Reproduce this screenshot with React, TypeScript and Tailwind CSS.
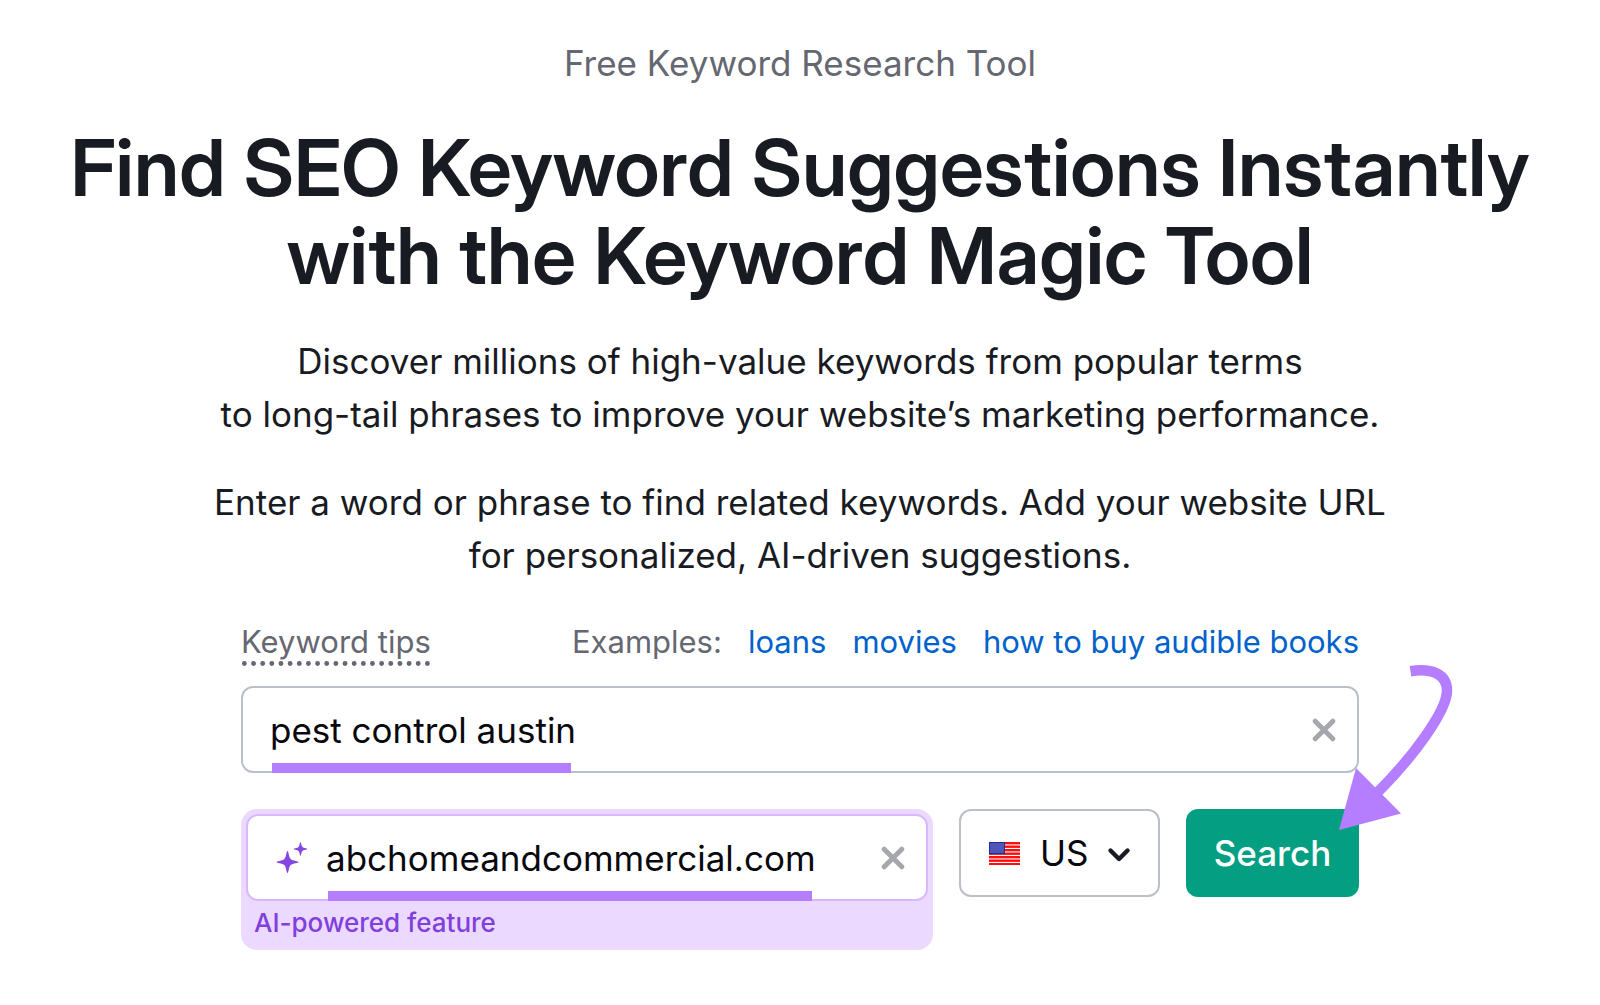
function ClearIcon() {
  return (
    <svg aria-hidden="true" viewBox="0 0 24 24" className="size-6" fill="none" stroke="#a6a7ac" strokeWidth="4.9" strokeLinecap="round">
      <path d="M3.200 3.200 20.800 20.800M20.800 3.200 3.200 20.800" />
    </svg>
  );
}

function Sparkles() {
  return (
    <svg aria-hidden="true" viewBox="0 0 32 32" className="h-8 w-8 shrink-0" fill="#8446e0">
      <path d="M11.500 9C12.700 9 12.500 14.500 14.600 16.900C17 19 22.500 18.800 22.500 20C22.500 21.200 17 21 14.600 23.100C12.500 25.500 12.700 31 11.500 31C10.300 31 10.500 25.500 8.400 23.100C6 21 .5 21.200 .5 20C.5 18.800 6 19 8.400 16.900C10.500 14.500 10.300 9 11.500 9Z" />
      <path d="M24.500 .3C25.300 .3 25.200 3.600 26.500 5C27.900 6.300 31.200 6.200 31.200 7C31.200 7.800 27.900 7.700 26.500 9C25.200 10.400 25.300 13.700 24.500 13.700C23.700 13.700 23.800 10.400 22.500 9C21.100 7.700 17.800 7.800 17.800 7C17.800 6.200 21.100 6.300 22.500 5C23.800 3.600 23.700 .3 24.500 .3Z" />
    </svg>
  );
}

function Flag() {
  return (
    <svg aria-hidden="true" viewBox="0 0 31 23" className="pointer-events-none absolute top-[33px] left-[30px] h-[23px] w-[31px]">
      <rect width="31" height="23" fill="#fff" />
      {[0, 3.500, 7, 10.500, 14, 17.500, 21].map((y) => (
        <rect key={y} y={y} width="31" height="2.400" fill="#ff0d0d" />
      ))}
      <rect width="16" height="12" fill="#1f2a9c" />
      <rect x="1" y="1" width="14" height="10" fill="#4f55b5" />
    </svg>
  );
}

function Arrow() {
  return (
    <svg aria-hidden="true" viewBox="0 0 124 172" className="pointer-events-none absolute -top-37 -right-25 h-[172px] w-[124px]">
      <path d="M75.500 10.200C97 7 112 13 112 29.500C112 50 78 96 42 132" fill="none" stroke="#b57dff" strokeWidth="10.500" />
      <path d="M21 107 66 152.500 4 169Z" fill="#b57dff" />
    </svg>
  );
}

export default function App() {
  return (
    <main className="flex min-h-screen flex-col items-center overflow-hidden bg-white px-4 pt-[39px] text-center font-['Inter',sans-serif] text-[#191b23]">
      <p className="text-[35px] leading-12 text-[#656771]">Free Keyword Research Tool</p>
      <h1 className="mt-9 font-['Inter_Display','Inter',sans-serif] text-[79px] leading-[88px] font-semibold">
        Find SEO Keyword Suggestions Instantly
        <br />
        with the Keyword Magic Tool
      </h1>
      <p className="mt-9 text-[35px] leading-[53px]">
        Discover millions of high-value keywords from popular terms
        <br />
        to long-tail phrases to improve your website’s marketing performance.
      </p>
      <p className="mt-[35px] text-[35px] leading-[53px]">
        Enter a word or phrase to find related keywords. Add your website URL
        <br />
        for personalized, AI-driven suggestions.
      </p>

      <form className="mt-10 w-full max-w-[1118px] text-left" onSubmit={(e) => e.preventDefault()}>
        <div className="flex items-start justify-between text-[31px] leading-10 text-[#656771]">
          <button type="button" className="relative">
            Keyword tips
            <svg aria-hidden="true" viewBox="0 0 188 5" className="absolute top-[39px] left-0 h-[5px] w-full">
              <path d="M2.500 2.500H186" fill="none" stroke="#656771" strokeWidth="4.900" strokeLinecap="round" strokeDasharray="0 9.150" />
            </svg>
          </button>
          <div className="flex gap-[26px]">
            <span>Examples:</span>
            <a href="#loans" className="text-[#0062cc]">loans</a>
            <a href="#movies" className="text-[#0062cc]">movies</a>
            <a href="#audible" className="text-[#0062cc]">how to buy audible books</a>
          </div>
        </div>

        <div className="relative mt-6 flex h-[87px] items-center rounded-xl border-2 border-[#bbbfc9] pr-[21px] pl-[27px]">
          <input aria-label="Keyword" defaultValue="pest control austin" className="h-full min-w-0 flex-1 bg-transparent text-[35px] text-[#08090f] outline-none" />
          <button type="button" aria-label="Clear keyword"><ClearIcon /></button>
          <span className="absolute -bottom-0.5 left-[29px] h-2.5 w-[299px] bg-[#b57dff]" />
        </div>

        <div className="mt-9 flex items-start">
          <div className="flex-1 rounded-2xl bg-[#ecd9ff] p-[5px]">
            <div className="relative flex h-[87px] items-center rounded-xl border-2 border-[#d9b8ff] bg-white pr-[21px] pl-7">
              <Sparkles />
              <input id="site" aria-label="Website URL" defaultValue="abchomeandcommercial.com" className="ml-[18px] h-full min-w-0 flex-1 bg-transparent text-[35px] text-[#08090f] outline-none" />
              <button type="button" aria-label="Clear website"><ClearIcon /></button>
              <span className="absolute -bottom-0.5 left-20 h-2.5 w-[484px] bg-[#b57dff]" />
            </div>
            <label htmlFor="site" className="block px-2 py-1.5 text-[26px] leading-8 font-medium text-[#8040dd]">AI-powered feature</label>
          </div>
          <div className="relative ml-[26px] h-22 w-[201px]">
            <Flag />
            <select aria-label="Country" className="h-full w-full appearance-none rounded-xl border-2 border-[#bbbfc9] bg-transparent pl-[79px] text-[35px] text-[#08090f]">
              <option>US</option>
            </select>
            <svg aria-hidden="true" viewBox="0 0 24 16" className="pointer-events-none absolute top-[38px] right-[29px] h-4 w-6" fill="none" stroke="#191b23" strokeWidth="4.400" strokeLinecap="round" strokeLinejoin="round">
              <path d="M3.500 3.500 12 12 20.500 3.500" />
            </svg>
          </div>
          <div className="relative ml-[26px]">
            <button type="submit" className="h-22 w-[173px] rounded-xl bg-[#049f83] text-[35px] font-medium text-white">Search</button>
            <Arrow />
          </div>
        </div>
      </form>
    </main>
  );
}
